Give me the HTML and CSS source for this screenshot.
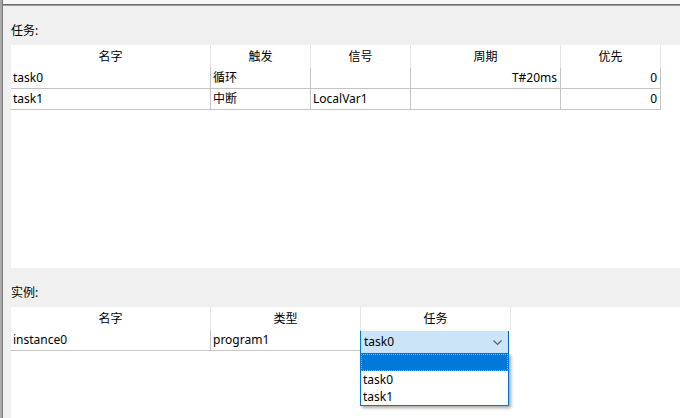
FILE: index.html
```html
<!DOCTYPE html>
<html>
<head>
<meta charset="utf-8">
<link rel="stylesheet" href="styles.css">
</head>
<body>
<div class="app">
  <div class="leftbar"></div>
  <div class="main">
    <div class="topstrip"></div>
    <div class="label">任务:</div>
    <div class="view tasks">
      <div class="row head t5">
        <div class="c">名字</div><div class="c">触发</div><div class="c">信号</div><div class="c">周期</div><div class="c">优先</div>
      </div>
      <div class="row data t5">
        <div class="c">task0</div><div class="c">循环</div><div class="c"></div><div class="c r">T#20ms</div><div class="c r">0</div>
      </div>
      <div class="row data t5">
        <div class="c">task1</div><div class="c">中断</div><div class="c">LocalVar1</div><div class="c r"></div><div class="c r">0</div>
      </div>
    </div>
    <div class="label">实例:</div>
    <div class="view inst">
      <div class="row head t3">
        <div class="c">名字</div><div class="c">类型</div><div class="c">任务</div>
      </div>
      <div class="row data t3">
        <div class="c">instance0</div><div class="c">program1</div>
        <div class="c editcell">
          <div class="combo">
            <span>task0</span>
            <svg class="chev" width="9" height="6" viewBox="0 0 9 6"><polyline points="0.5,0.5 4.5,4.5 8.5,0.5" fill="none" stroke="#5a5a5a" stroke-width="1.1"/></svg>
          </div>
          <div class="list">
            <div class="item sel"></div>
            <div class="item">task0</div>
            <div class="item">task1</div>
          </div>
        </div>
      </div>
    </div>
  </div>
</div>
</body>
</html>
```

FILE: styles.css
```css
html, body {
  margin: 0;
  padding: 0;
}
body {
  width: 680px;
  height: 418px;
  overflow: hidden;
  background: #f0f0f0;
  font-family: "Noto Sans", "Noto Sans CJK SC", sans-serif;
  font-size: 12px;
  color: #000;
}
.app {
  display: flex;
  height: 418px;
}
.leftbar {
  width: 3px;
  flex: none;
  background: linear-gradient(to right, #a8a8a8 0, #a8a8a8 2px, #7a7a7a 2px);
}
.main {
  flex: 1;
  display: flex;
  flex-direction: column;
  min-width: 0;
}
.topstrip {
  height: 4px;
  background: #f7f7f7;
  border-bottom: 1px solid #6e6e6e;
  box-shadow: 0 1px 0 #a0a0a0;
  margin-bottom: 1px;
}
.label {
  height: 39px;
  box-sizing: border-box;
  padding: 17px 0 0 8px;
  line-height: 16px;
}
.view {
  margin-left: 8px;
  background: #fff;
}
.tasks {
  height: 223px;
}
.inst {
  flex: 1;
}
.row {
  display: grid;
}
.t5 {
  grid-template-columns: 200px 100px 100px 150px 100px;
  width: 650px;
}
.t3 {
  grid-template-columns: 200px 150px 150px;
  width: 500px;
}
.c {
  box-sizing: border-box;
  white-space: nowrap;
  overflow: hidden;
}
.head .c {
  height: 23px;
  line-height: 23px;
  text-align: center;
  border-right: 1px solid #e5e5e5;
}
.data {
  border-bottom: 1px solid #c4c4c4;
}
.data .c {
  height: 20px;
  line-height: 20px;
  padding: 0 2px;
  border-right: 1px solid #c4c4c4;
}
.data .c.r {
  text-align: right;
  padding-right: 3px;
}
.t3.data {
  width: 350px;
}
.t3.data .c:nth-child(2) {
  border-right: 1px solid #c4c4c4;
}
.data .c.editcell {
  position: relative;
  overflow: visible;
  border-right: none;
  padding: 0;
}
.combo {
  position: absolute;
  left: -1px;
  top: 1px;
  width: 149px;
  height: 22px;
  box-sizing: border-box;
  background: #cce4f7;
  border-left: 1px solid #0078d7;
  border-right: 1px solid #0060b0;
  display: flex;
  align-items: center;
  justify-content: space-between;
  padding: 0 6px 0 3px;
  line-height: 20px;
}
.chev {
  display: block;
  margin-top: 1px;
}
.list {
  position: absolute;
  left: -1px;
  top: 23px;
  width: 149px;
  box-sizing: border-box;
  background: #fff;
  border: 1px solid #0078d7;
  box-shadow: 2px 2px 3px rgba(0, 0, 0, 0.35);
}
.item {
  height: 17px;
  line-height: 17px;
  padding-left: 2px;
}
.item.sel {
  background: #0078d7;
  outline: 1px dotted #f0a040;
  outline-offset: -1px;
}
```
